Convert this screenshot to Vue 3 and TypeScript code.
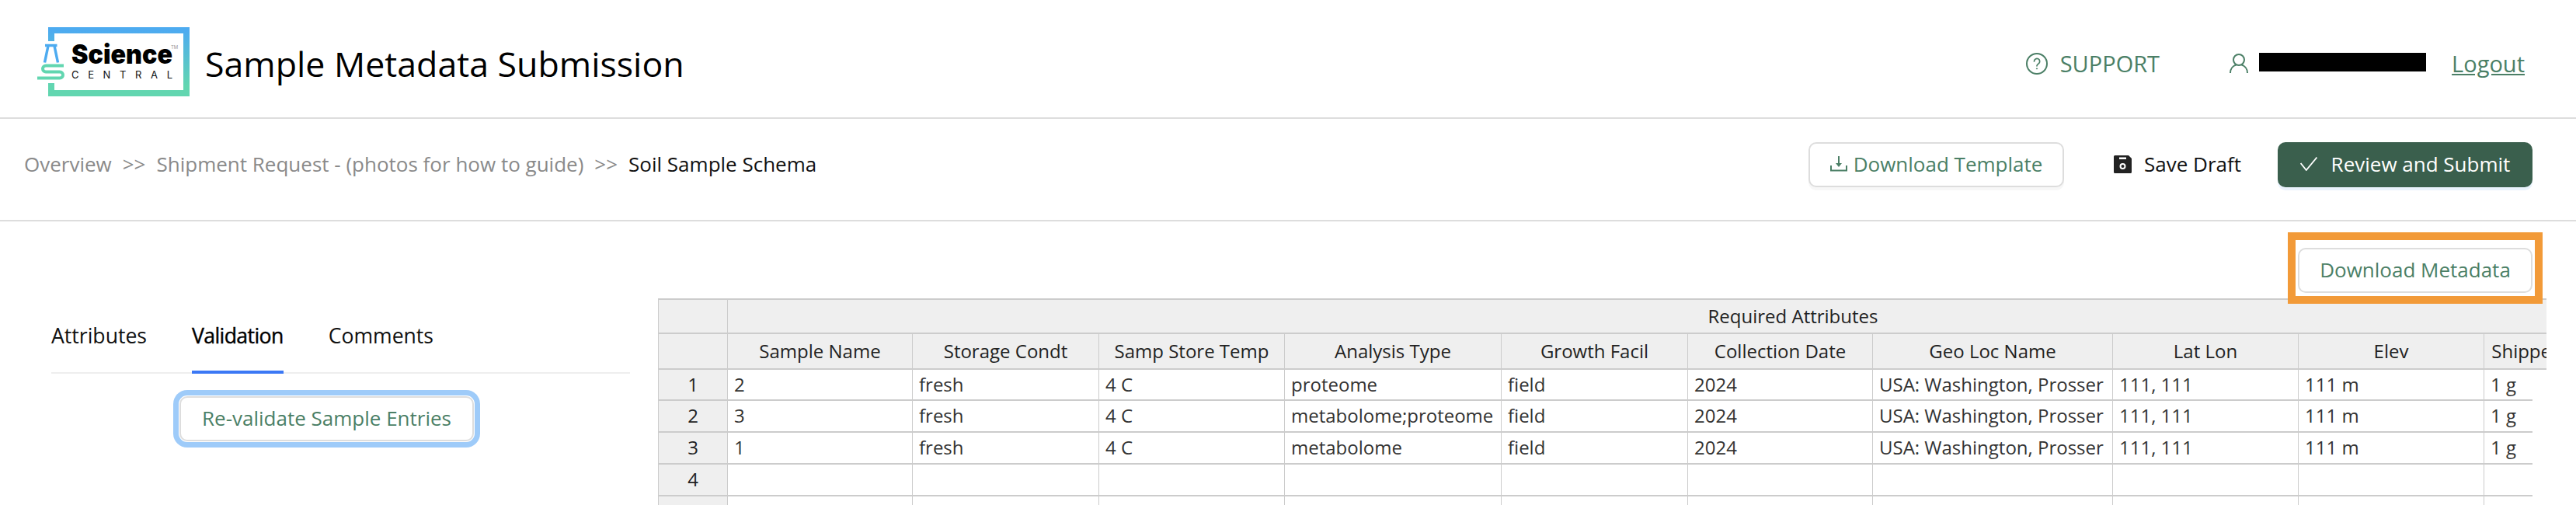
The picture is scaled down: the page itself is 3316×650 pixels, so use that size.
<script setup lang="ts">
const columns = [
  { label: 'Sample Name', width: 238 },
  { label: 'Storage Condt', width: 240 },
  { label: 'Samp Store Temp', width: 239 },
  { label: 'Analysis Type', width: 279 },
  { label: 'Growth Facil', width: 240 },
  { label: 'Collection Date', width: 238 },
  { label: 'Geo Loc Name', width: 309 },
  { label: 'Lat Lon', width: 239 },
  { label: 'Elev', width: 239 },
  { label: 'Shipped Amount', width: 207 }
]

const rows = [
  ['2', 'fresh', '4 C', 'proteome', 'field', '2024', 'USA: Washington, Prosser', '111, 111', '111 m', '1 g'],
  ['3', 'fresh', '4 C', 'metabolome;proteome', 'field', '2024', 'USA: Washington, Prosser', '111, 111', '111 m', '1 g'],
  ['1', 'fresh', '4 C', 'metabolome', 'field', '2024', 'USA: Washington, Prosser', '111, 111', '111 m', '1 g'],
  ['', '', '', '', '', '', '', '', '', ''],
  ['', '', '', '', '', '', '', '', '', '']
]

const rowHeights = [40, 41, 41, 41, 40]
</script>

<template>
  <div class="page">
    <header class="topbar">
      <svg class="logo" viewBox="0 0 198 90" width="198" height="90">
        <defs>
          <linearGradient id="frameGrad" x1="0" y1="0" x2="0" y2="1">
            <stop offset="0.05" stop-color="#4dabf0" />
            <stop offset="0.85" stop-color="#62d6b0" />
          </linearGradient>
        </defs>
        <path d="M15 18V0H197V89H15V72H23V81H189V8H23V18Z" fill="url(#frameGrad)" />
        <path d="M11 23.5H26.5M15 24L10.5 45.5M23 24L27.5 45.5" fill="none" stroke="#4dabf0" stroke-width="3.5" />
        <path d="M35 49.5H12a4 4 0 0 0 0 8H30a4 4 0 0 1 0 8H1" fill="none" stroke="#62d6b0" stroke-width="4" />
        <text x="45" y="47" class="logo-science" textLength="130" lengthAdjust="spacingAndGlyphs">Science</text>
        <text x="173" y="28" class="logo-tm">TM</text>
        <text x="45" y="66" class="logo-central" textLength="130">CENTRAL</text>
      </svg>
      <h1 class="title">Sample Metadata Submission</h1>
      <div class="topbar-right">
        <a class="support">
          <svg width="28" height="28" viewBox="0 0 28 28" fill="none" stroke="#4b7f66" stroke-width="2">
            <circle cx="14" cy="14" r="13" />
            <path d="M10.5 11a3.6 3.6 0 1 1 5.6 3c-1.3.8-2.1 1.4-2.1 2.8" stroke-width="1.7" stroke-linecap="round" />
            <circle cx="14" cy="20.4" r=".6" fill="#4b7f66" stroke-width="1" />
          </svg>
          SUPPORT
        </a>
        <div class="user">
          <svg width="24" height="25" viewBox="0 0 24 25" fill="none" stroke="#4b7f66" stroke-width="2">
            <circle cx="12" cy="8" r="7" />
            <path d="M1 25c0-6 4-9.500 7.500-10.500M23 25c0-6-4-9.500-7.500-10.500" />
          </svg>
          <span class="redacted"></span>
        </div>
        <a class="logout">Logout</a>
      </div>
    </header>

    <div class="toolbar">
      <nav class="crumbs">
        <span>Overview</span>
        <span class="sep">&gt;&gt;</span>
        <span>Shipment Request - (photos for how to guide)</span>
        <span class="sep">&gt;&gt;</span>
        <span class="current">Soil Sample Schema</span>
      </nav>
      <div class="actions">
        <button class="btn btn-outline btn-template">
          <svg width="22" height="20" viewBox="0 0 22 20" fill="none" stroke="#4b7f66" stroke-width="2">
            <path d="M1 12V18.500H21V12M11 0V10" />
            <path d="M7 9H15L11 14Z" fill="#4b7f66" stroke="none" />
          </svg>
          Download Template
        </button>
        <button class="btn btn-plain">
          <svg width="23" height="23" viewBox="0 0 23 23">
            <path d="M1.500 0H19L23 4V21.500a1.500 1.500 0 0 1-1.500 1.500H1.500A1.500 1.500 0 0 1 0 21.500V1.500A1.500 1.500 0 0 1 1.500 0Z" fill="#222" />
            <rect x="7" y="2.500" width="9" height="2.500" fill="#fff" />
            <circle cx="11.500" cy="14" r="3" fill="none" stroke="#fff" stroke-width="2" />
          </svg>
          Save Draft
        </button>
        <button class="btn btn-solid">
          <svg width="22" height="18" viewBox="0 0 22 18" fill="none" stroke="#fff" stroke-width="1.800">
            <path d="M.6 8L7.800 17L21.400 .6" />
          </svg>
          Review and Submit
        </button>
      </div>
    </div>

    <main class="content">
      <aside class="side">
        <div class="tabs">
          <span class="tab">Attributes</span>
          <span class="tab active">Validation</span>
          <span class="tab">Comments</span>
        </div>
        <button class="btn btn-outline btn-validate">Re-validate Sample Entries</button>
      </aside>
      <section class="sheet-area">
        <div class="sheet-top">
          <button class="btn btn-outline btn-metadata">Download Metadata</button>
        </div>
        <div class="sheet-head">
          <table class="grid">
            <colgroup>
              <col style="width: 90px" />
              <col v-for="c in columns" :key="c.label" :style="{ width: c.width + 'px' }" />
            </colgroup>
            <thead>
              <tr class="group-row">
                <th></th>
                <th colspan="10"><span class="group-label">Required Attributes</span></th>
              </tr>
              <tr>
                <th></th>
                <th v-for="c in columns" :key="c.label">{{ c.label }}</th>
              </tr>
            </thead>
          </table>
        </div>
        <div class="sheet-body">
          <table class="grid">
            <colgroup>
              <col style="width: 90px" />
              <col v-for="c in columns" :key="c.label" :style="{ width: c.width + 'px' }" />
            </colgroup>
            <tbody>
              <tr v-for="(row, i) in rows" :key="i" :style="{ height: rowHeights[i] + 'px' }">
                <th>{{ i + 1 }}</th>
                <td v-for="(cell, j) in row" :key="j">{{ cell }}</td>
              </tr>
            </tbody>
          </table>
        </div>
      </section>
    </main>
  </div>
</template>

<style>
html,
body {
  margin: 0;
  background: #fff;
  overflow: hidden;
}
</style>

<style scoped>
.page {
  width: 3316px;
  height: 650px;
  overflow: hidden;
  font-family: "Open Sans", sans-serif;
  color: #111;
  background: #fff;
}

.topbar {
  height: 151px;
  display: flex;
  align-items: center;
  padding: 0 66px 0 47px;
  border-bottom: 2px solid #ddd;
}

.logo {
  display: block;
  flex: none;
  overflow: visible;
  margin-top: 8px;
}

.logo-science {
  font-family: Inter, sans-serif;
  font-weight: 900;
  font-size: 34px;
  fill: #000;
}

.logo-tm {
  font-family: Inter, sans-serif;
  font-size: 6px;
  fill: #999;
}

.logo-central {
  font-family: Inter, sans-serif;
  font-size: 13px;
  fill: #111;
}

.title {
  margin: 12px 0 0 19px;
  font-size: 44.700px;
  font-weight: 500;
  color: #000;
}

.topbar-right {
  margin-left: auto;
  margin-top: 12px;
  display: flex;
  align-items: center;
  font-size: 29px;
  font-weight: 500;
  color: #4b7f66;
}

.support {
  display: flex;
  align-items: center;
  gap: 16px;
  margin-right: 90px;
}

.user {
  display: flex;
  align-items: center;
  gap: 14px;
  margin-right: 33px;
}

.redacted {
  display: block;
  width: 215px;
  height: 24px;
  background: #000;
  margin-top: -4px;
}

.logout {
  text-decoration: underline;
}

.toolbar {
  height: 132px;
  box-sizing: border-box;
  display: flex;
  align-items: center;
  padding: 0 56px 12px 31px;
  border-bottom: 2px solid #ddd;
}

.crumbs {
  display: flex;
  gap: 14px;
  font-size: 26px;
  color: #8a8a8a;
  padding-bottom: 2px;
}

.crumbs .current {
  color: #111;
}

.actions {
  margin-left: auto;
  display: flex;
  align-items: center;
}

.btn {
  font-family: inherit;
  font-size: 26px;
  font-weight: 500;
  height: 58px;
  display: inline-flex;
  align-items: center;
  justify-content: center;
  border-radius: 10px;
  box-sizing: border-box;
  background: #fff;
  padding: 0 0 2px;
}

.btn-outline {
  color: #4b7f66;
  border: 2px solid #ddd;
}

.btn-template {
  width: 329px;
  gap: 8px;
  box-shadow: 0 4px 0 #f7f7f7;
}

.btn-plain {
  width: 275px;
  gap: 16px;
  border: 0;
  color: #111;
  padding-left: 17px;
}

.btn-solid {
  width: 328px;
  gap: 18px;
  border: 0;
  color: #fff;
  background: #3a5f4d;
  box-shadow: 0 4px 0 #eaf3fd;
}

.content {
  display: grid;
  grid-template-columns: 847px 1fr;
}

.side {
  padding: 109px 36px 0 66px;
  display: flex;
  flex-direction: column;
}

.tabs {
  display: flex;
  gap: 58px;
  border-bottom: 2px solid #eee;
  height: 85px;
  font-size: 26.600px;
  font-weight: 500;
}

.tab {
  padding-top: 20px;
  color: #111;
  box-sizing: border-box;
  height: 87px;
}

.tab.active {
  color: #000;
  letter-spacing: -0.6px;
  -webkit-text-stroke: 0.4px #000;
  border-bottom: 4px solid #3b78f5;
}

.btn-validate {
  margin-top: 29px;
  margin-left: 165px;
  width: 379px;
  box-shadow: 0 0 0 1px #fff, 0 0 0 8px #9ecbf9;
}

.sheet-area {
  min-width: 0;
}

.sheet-top {
  display: flex;
  justify-content: flex-end;
  height: 99px;
  padding: 34px 56px 0 0;
  box-sizing: border-box;
}

.btn-metadata {
  width: 302px;
  position: relative;
  z-index: 2;
}

/* orange highlight around the button */
.btn-metadata::after {
  content: "";
  position: absolute;
  inset: -22px -15px -16px -15px;
  border: 10px solid #f29a38;
  pointer-events: none;
}

.sheet-head {
  width: 2431px;
  overflow: hidden;
}

.sheet-body {
  width: 2413px;
  overflow: hidden;
}

.grid {
  table-layout: fixed;
  border-collapse: separate;
  border-spacing: 0;
  width: 2558px;
  font-size: 24px;
  color: #333;
}

.grid th,
.grid td {
  box-sizing: border-box;
  border-right: 1px solid #ccc;
  border-bottom: 2px solid #ccc;
  white-space: nowrap;
  overflow: hidden;
  padding: 0 8px 2px;
  font-weight: 400;
}

.grid thead th {
  background: #efefef;
  text-align: center;
  color: #222;
  height: 46px;
}

.grid thead tr:first-child th {
  border-top: 2px solid #ccc;
}

.grid tbody th {
  background: #efefef;
  text-align: center;
  color: #222;
}

.grid tr > :first-child {
  border-left: 1px solid #ccc;
}

/* the real group header runs on past the clipped columns, so its label is centred on that width */
.group-row th:nth-child(2) {
  text-align: left;
  padding: 0 0 2px;
}

.group-label {
  display: inline-block;
  width: 2742px;
  text-align: center;
}
</style>
